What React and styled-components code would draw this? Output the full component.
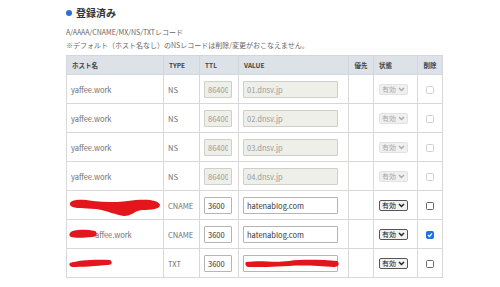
import React from "react";
import styled, { createGlobalStyle } from "styled-components";

const GlobalStyle = createGlobalStyle`
  body {
    margin: 0;
    background: #fff;
    font-family: "Noto Sans CJK JP", "Noto Sans", sans-serif;
    color: #555;
  }
`;

const Page = styled.div`
  padding: 5px 0 0 66px;
  width: 376px;
`;

const Heading = styled.h2`
  display: flex;
  align-items: center;
  gap: 4px;
  margin: 0 0 5px 0;
  font-size: 10px;
  font-weight: bold;
  color: #333;
  line-height: 16px;
  &::before {
    content: "";
    width: 6px;
    height: 6px;
    border-radius: 50%;
    background: #2f6fd1;
  }
`;

const Note = styled.p`
  margin: 0;
  font-size: 7px;
  line-height: 13px;
  color: #666;
`;

const Table = styled.table`
  margin-top: 3px;
  width: 376px;
  border-collapse: collapse;
  table-layout: fixed;
  font-size: 7.5px;
  th, td {
    box-sizing: border-box;
  }
`;

const Th = styled.th`
  background: #dde2e9;
  color: #444;
  font-weight: bold;
  text-align: ${(p) => (p.$center ? "center" : "left")};
  height: 19px;
  padding: 0 5px;
  border: 1px solid #d3d6da;
  font-size: 6.5px;
`;

const Td = styled.td`
  position: relative;
  height: 29px;
  padding: 0 4px;
  border: 1px solid #d8d8d8;
  color: #707070;
  text-align: ${(p) => (p.$center ? "center" : "left")};
`;

const Field = styled.input`
  box-sizing: border-box;
  height: 17px;
  width: ${(p) => p.$w}px;
  padding: 0 3px;
  font: inherit;
  font-size: 7.5px;
  border: 1px solid ${(p) => (p.disabled ? "#cfcfca" : "#b5b5b5")};
  background: ${(p) => (p.disabled ? "#efefea" : "#fff")};
  color: ${(p) => (p.disabled ? "#999" : "#333")};
  border-radius: 1px;
  outline: none;
  vertical-align: middle;
`;

const Select = styled.span`
  display: inline-flex;
  align-items: center;
  gap: 2px;
  height: 9px;
  padding: 0 2px;
  font-size: 7px;
  line-height: 9px;
  border: 1px solid ${(p) => (p.$off ? "#e2e2e2" : "#555")};
  background: ${(p) => (p.$off ? "#f0f0f0" : "#f2f2f2")};
  color: ${(p) => (p.$off ? "#aaa" : "#222")};
  border-radius: 2px;
  margin-left: 1px;
`;

const Check = styled.span`
  display: inline-block;
  box-sizing: border-box;
  width: 8px;
  height: 8px;
  border: 1px solid ${(p) => (p.$on ? "#1a73e8" : p.$off ? "#d0d0d0" : "#666")};
  border-radius: 1.5px;
  background: ${(p) => (p.$on ? "#1a73e8" : "#fff")};
  vertical-align: middle;
  position: relative;
`;

const Redact = styled.svg`
  position: absolute;
  left: ${(p) => p.$x}px;
  top: ${(p) => p.$y}px;
  pointer-events: none;
`;

const HostName = styled.span`
  padding-left: ${(p) => p.$indent || 0}px;
`;

const Chevron = ({ off }) => (
  <svg width="7" height="5" viewBox="0 0 7 5">
    <path d="M1 1 L3.5 3.6 L6 1" fill="none" stroke={off ? "#aaa" : "#222"} strokeWidth="1.4" />
  </svg>
);

const cols = [97, 36, 39, 110, 25, 44, 25];

const rows = [
  { host: "yaffee.work", type: "NS", ttl: "86400", value: "01.dnsv.jp", off: true },
  { host: "yaffee.work", type: "NS", ttl: "86400", value: "02.dnsv.jp", off: true },
  { host: "yaffee.work", type: "NS", ttl: "86400", value: "03.dnsv.jp", off: true },
  { host: "yaffee.work", type: "NS", ttl: "86400", value: "04.dnsv.jp", off: true },
  { host: "", type: "CNAME", ttl: "3600", value: "hatenablog.com", red: "a" },
  { host: "affee.work", type: "CNAME", ttl: "3600", value: "hatenablog.com", red: "b", checked: true },
  { host: "", type: "TXT", ttl: "3600", value: "", red: "c" },
];

const HostRedact = ({ kind }) => {
  if (kind === "a")
    return (
      <Redact $x={1} $y={6} width="94" height="22" viewBox="0 0 94 22">
        <path d="M2 6 C4 2 14 2 25 4 C40 6 55 5 68 3 C80 2 91 3 92 8 C92 12 84 13 74 13 C66 14 64 19 56 19 C48 18 40 14 28 12 C16 11 4 12 2 8 Z" fill="#e2161b" />
      </Redact>
    );
  if (kind === "b")
    return (
      <Redact $x={1} $y={8} width="30" height="12" viewBox="0 0 30 12">
        <path d="M2 5 C4 1 18 1 27 3 C30 5 29 9 24 9 C16 10 6 10 3 9 C1 8 1 6 2 5 Z" fill="#e2161b" />
      </Redact>
    );
  return (
    <Redact $x={1} $y={9} width="46" height="11" viewBox="0 0 46 11">
      <path d="M2 5 C10 2 28 1 42 2 C45 4 44 7 40 7 C28 8 14 9 4 9 C1 8 1 6 2 5 Z" fill="#e2161b" />
    </Redact>
  );
};

export default function App() {
  return (
    <>
      <GlobalStyle />
      <Page>
        <Heading>登録済み</Heading>
        <Note>A/AAAA/CNAME/MX/NS/TXTレコード</Note>
        <Note>※デフォルト（ホスト名なし）のNSレコードは削除/変更がおこなえません。</Note>
        <Table>
          <colgroup>
            {cols.map((w, i) => (
              <col key={i} style={{ width: w }} />
            ))}
          </colgroup>
          <thead>
            <tr>
              <Th>ホスト名</Th>
              <Th>TYPE</Th>
              <Th>TTL</Th>
              <Th>VALUE</Th>
              <Th $center>優先</Th>
              <Th>状態</Th>
              <Th $center>削除</Th>
            </tr>
          </thead>
          <tbody>
            {rows.map((r, i) => (
              <tr key={i}>
                <Td>
                  <HostName $indent={r.red === "b" ? 24 : 0}>{r.host}</HostName>
                  {r.red && <HostRedact kind={r.red} />}
                </Td>
                <Td>{r.type}</Td>
                <Td>
                  <Field $w={28} disabled={r.off} defaultValue={r.ttl} readOnly />
                </Td>
                <Td>
                  <Field $w={95} disabled={r.off} defaultValue={r.value} readOnly />
                  {r.red === "c" && (
                    <Redact $x={5} $y={9} width="96" height="11" viewBox="0 0 96 11">
                      <path d="M2 4 C20 2 28 5 45 3 C60 1 80 2 93 3 C96 5 95 9 90 9 C75 8 60 7 45 8 C30 9 15 9 4 9 C1 8 1 5 2 4 Z" fill="#e2161b" />
                    </Redact>
                  )}
                </Td>
                <Td />
                <Td>
                  <Select $off={r.off}>
                    有効 <Chevron off={r.off} />
                  </Select>
                </Td>
                <Td $center>
                  <Check $off={r.off} $on={r.checked}>
                    {r.checked && (
                      <svg width="6" height="6" viewBox="0 0 6 6" style={{ position: "absolute", left: 0, top: 0 }}>
                        <path d="M1 3 L2.5 4.5 L5 1.3" fill="none" stroke="#fff" strokeWidth="1.2" />
                      </svg>
                    )}
                  </Check>
                </Td>
              </tr>
            ))}
          </tbody>
        </Table>
      </Page>
    </>
  );
}
